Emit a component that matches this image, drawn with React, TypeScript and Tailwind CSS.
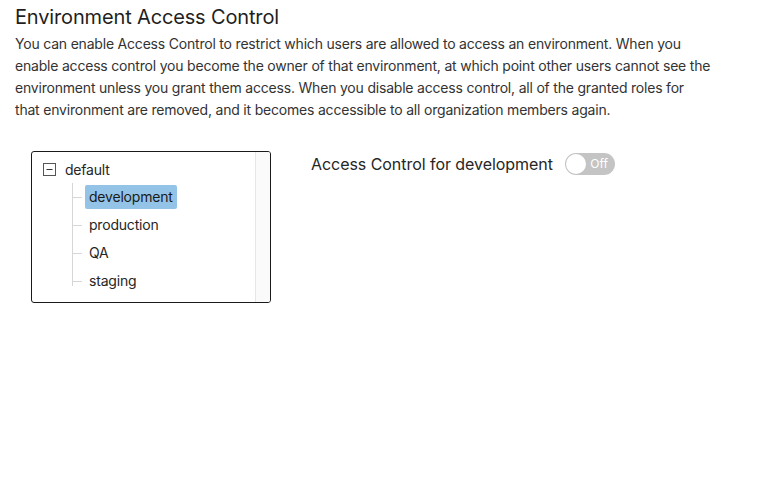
import { useState } from "react";

const envs = ["development", "production", "QA", "staging"];

function MinusBox() {
  return (
    <svg width="13" height="13" viewBox="0 0 13 13" className="shrink-0">
      <rect x="0.5" y="0.5" width="12" height="12" fill="white" stroke="#555" />
      <line x1="3.5" y1="6.5" x2="9.5" y2="6.5" stroke="#333" strokeWidth="1.2" />
    </svg>
  );
}

export default function App() {
  const [selected, setSelected] = useState("development");
  const [enabled, setEnabled] = useState(false);

  return (
    <div
      className="px-[15px] pt-[5px] text-[#262626]"
      style={{ fontFamily: "Inter, 'Noto Sans', sans-serif" }}
    >
      <h1 className="text-[20px] leading-[24px] font-normal tracking-[-0.15px] text-[#1f1f1f]">
        Environment Access Control
      </h1>
      <p className="mt-[4px] w-[696px] text-[14px] leading-[22px] tracking-[-0.2px] text-[#333]">
        You can enable Access Control to restrict which users are allowed to access an
        environment. When you enable access control you become the owner of that environment,
        at which point other users cannot see the environment unless you grant them access.
        When you disable access control, all of the granted roles for that environment are
        removed, and it becomes accessible to all organization members again.
      </p>

      <div className="mt-[30px] ml-[16px] flex items-start">
        <div className="flex h-[152px] w-[240px] overflow-hidden rounded-[3px] border border-[#1a1a1a]">
          <div className="flex-1 pl-[11px] pt-[7px]">
            <div className="flex h-[20px] items-center gap-[9px] text-[14px] tracking-[-0.2px]">
              <MinusBox />
              <span>default</span>
            </div>
            <ul className="relative ml-[29px] mt-[4px]">
              <span className="absolute left-0 top-0 h-[103px] w-px bg-[#d6d6d6]" />
              {envs.map((e) => (
                <li key={e} className="relative flex h-[28px] items-center">
                  <span className="h-px w-[10px] bg-[#d6d6d6]" />
                  <button
                    onClick={() => setSelected(e)}
                    className={`ml-[3px] h-[24px] rounded-[2px] px-[4px] text-[14px] leading-[24px] tracking-[-0.2px] ${
                      selected === e ? "bg-[#93c4e8] text-[#1a1a1a]" : "text-[#262626]"
                    }`}
                  >
                    {e}
                  </button>
                </li>
              ))}
            </ul>
          </div>
          <div className="w-[15px] border-l border-[#e6e6e6] bg-[#fafafa]" />
        </div>

        <div className="ml-[40px] mt-[1px] flex items-center gap-[12px]">
          <span className="text-[16px] leading-[24px] tracking-[-0.05px] text-[#262626]">
            Access Control for {selected}
          </span>
          <button
            onClick={() => setEnabled(!enabled)}
            className={`relative h-[22px] w-[50px] rounded-full ${
              enabled ? "bg-[#3b82f6]" : "bg-[#c4c4c4]"
            }`}
          >
            <span
              className={`absolute top-[1px] h-[20px] w-[20px] rounded-full bg-white ${
                enabled ? "right-[1px]" : "left-[1px]"
              }`}
            />
            <span
              className={`absolute top-0 text-[12px] leading-[22px] text-white ${
                enabled ? "left-[8px]" : "right-[7px]"
              }`}
            >
              {enabled ? "On" : "Off"}
            </span>
          </button>
        </div>
      </div>
    </div>
  );
}
